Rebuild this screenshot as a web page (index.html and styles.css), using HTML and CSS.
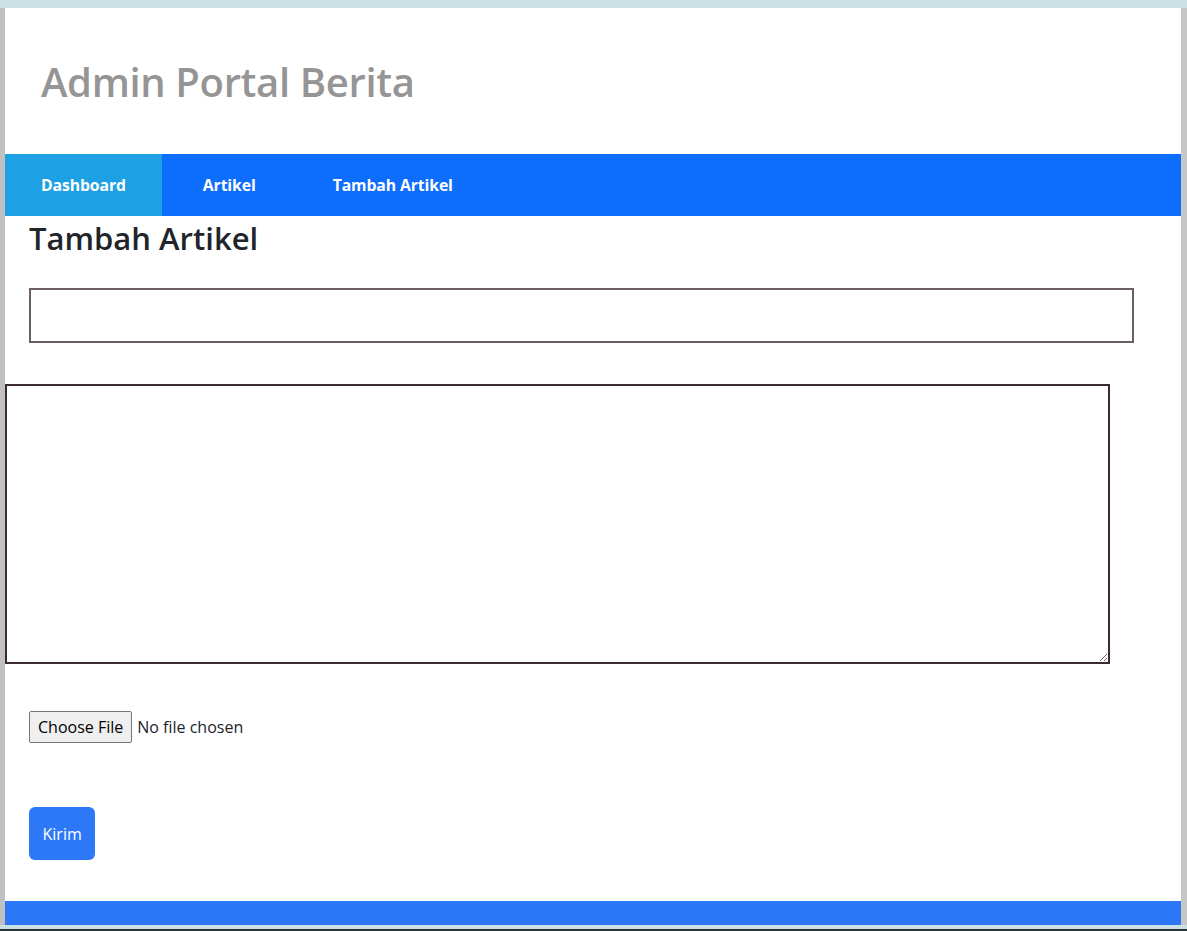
FILE: index.html
```html
<!DOCTYPE html>
<html lang="id">
<head>
<meta charset="utf-8">
<title>Admin Portal Berita</title>
<link rel="stylesheet" href="styles.css">
</head>
<body>
<div class="frame">
  <div class="page">
    <header class="site-header">
      <h1 class="site-title">Admin Portal Berita</h1>
    </header>
    <nav class="nav">
      <a class="nav-item active" href="#">Dashboard</a>
      <a class="nav-item" href="#">Artikel</a>
      <a class="nav-item" href="#">Tambah Artikel</a>
    </nav>
    <main class="content">
      <h2 class="page-title">Tambah Artikel</h2>
      <form class="form">
        <input class="field-title" type="text">
        <textarea class="field-body"></textarea>
        <input class="field-file" type="file">
        <button class="btn-submit" type="button">Kirim</button>
      </form>
    </main>
    <footer class="footer"></footer>
  </div>
</div>
<div class="bottom-edge"></div>
</body>
</html>
```

FILE: styles.css
```css
html, body {
  margin: 0;
  padding: 0;
}
body {
  background: #c9e0e4;
  padding-top: 8px;
  font-family: "Open Sans", "Noto Sans", sans-serif;
  color: #212529;
}
.frame {
  border-left: 5px solid #c0c0c0;
  border-right: 6px solid #c6c6c6;
}
.page {
  background: #fff;
  display: flex;
  flex-direction: column;
}
.site-header {
  height: 146px;
  display: flex;
  align-items: center;
  padding-left: 36px;
  box-sizing: border-box;
}
.site-title {
  margin: 0;
  font-size: 40px;
  font-weight: 600;
  color: #959595;
  letter-spacing: -0.35px;
}
.nav {
  height: 62px;
  background: #0d6efd;
  display: flex;
  gap: 5px;
}
.nav-item {
  display: flex;
  align-items: center;
  padding: 0 36px;
  color: #fff;
  font-weight: 700;
  font-size: 15.75px;
  letter-spacing: -0.1px;
  text-decoration: none;
}
.nav-item.active {
  background: #1ea0e4;
}
.content {
  padding: 0 24px;
}
.page-title {
  margin: 4px 0 0;
  font-size: 31px;
  font-weight: 600;
  line-height: 1.2;
  letter-spacing: 0;
}
.form {
  display: flex;
  flex-direction: column;
  align-items: flex-start;
}
.field-title {
  margin-top: 31px;
  width: 1105px;
  height: 55px;
  box-sizing: border-box;
  border: 2px solid #6b5f5f;
  outline: none;
}
.field-body {
  margin-top: 41px;
  margin-left: -24px;
  width: 1105px;
  height: 280px;
  box-sizing: border-box;
  border: 2px solid #3d2a2e;
  outline: none;
}
.field-file {
  margin-top: 47px;
  font-family: "Open Sans", sans-serif;
  font-size: 16px;
  height: 32px;
}
.field-file::file-selector-button {
  font-family: "Open Sans", sans-serif;
  font-size: 16px;
  height: 32px;
  padding: 0 8px;
  margin-right: 5px;
  background: #efefef;
  border: 1px solid #767676;
  border-radius: 2px;
  color: #000;
}
.btn-submit {
  margin-top: 64px;
  margin-bottom: 41px;
  height: 53px;
  padding: 0 13.5px;
  background: #2c78f7;
  color: #fff;
  border: none;
  border-radius: 6px;
  font-family: "Open Sans", sans-serif;
  font-size: 16px;
}
.footer {
  height: 24px;
  background: #2c77f8;
}
.bottom-edge {
  height: 2px;
  margin-top: 4px;
  background: #2b3336;
}
```
